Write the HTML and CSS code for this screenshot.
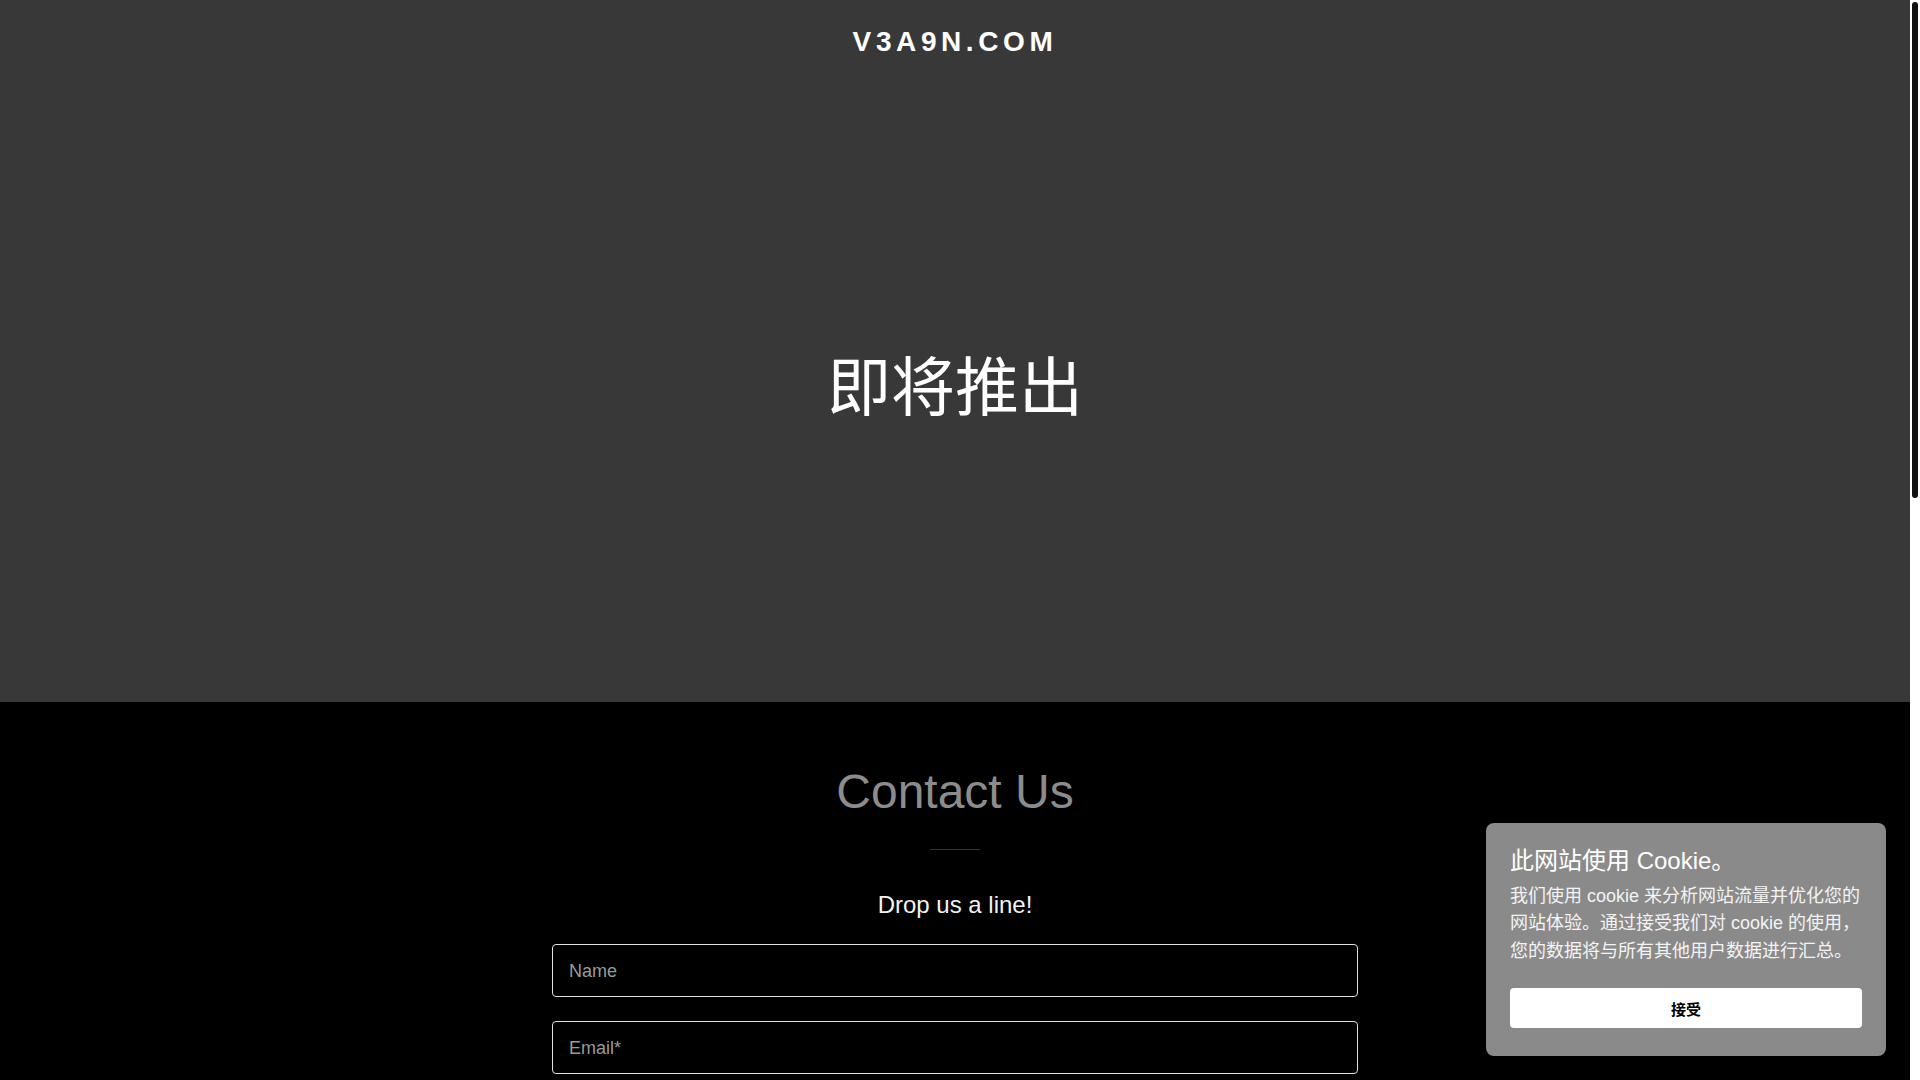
FILE: index.html
```html
<!DOCTYPE html>
<html lang="zh-CN">
<head>
<meta charset="utf-8">
<title>V3A9N.COM</title>
<link rel="stylesheet" href="styles.css">
</head>
<body>
  <div class="page">
    <section class="hero">
      <header class="site-header">
        <h1 class="brand">V3A9N.COM</h1>
      </header>
      <div class="hero-main">
        <h2 class="coming">即将推出</h2>
      </div>
    </section>

    <section class="contact">
      <h2 class="contact-title">Contact Us</h2>
      <div class="divider"></div>
      <p class="contact-sub">Drop us a line!</p>
      <form class="contact-form">
        <input class="field" type="text" placeholder="Name">
        <input class="field" type="email" placeholder="Email*">
        <textarea class="field field-area" placeholder="Message"></textarea>
        <button class="send" type="button">Send</button>
      </form>
    </section>

    <footer class="site-footer">
      <p class="copy">Copyright © 2024 V3A9N.COM - 保留所有权利。</p>
    </footer>
  </div>

  <div class="cookie">
    <h3 class="cookie-title">此网站使用 Cookie。</h3>
    <p class="cookie-text">我们使用 cookie 来分析网站流量并优化您的网站体验。通过接受我们对 cookie 的使用，您的数据将与所有其他用户数据进行汇总。</p>
    <button class="cookie-btn" type="button">接受</button>
  </div>

  <div class="scrollbar" aria-hidden="true">
    <div class="scrollbar-thumb"></div>
  </div>
</body>
</html>
```

FILE: styles.css
```css
html {
  background: #000;
}

body {
  margin: 0;
  padding-right: 10px;
  background: #000;
  font-family: "Liberation Sans", Arial, "Noto Sans CJK SC", sans-serif;
  color: #fff;
}

.scrollbar {
  position: fixed;
  top: 0;
  right: 0;
  width: 10px;
  height: 100vh;
  box-sizing: border-box;
  padding: 2px 2px 0;
  background: #fff;
}
.scrollbar-thumb {
  height: 496px;
  background: #111;
  border-radius: 3px;
}

.hero {
  height: 702px;
  background: #383838;
  display: flex;
  flex-direction: column;
}

.site-header {
  height: 84px;
  padding-top: 24px;
  box-sizing: border-box;
  text-align: center;
}

.brand {
  margin: 0;
  font-size: 28px;
  line-height: 36px;
  font-weight: 700;
  letter-spacing: 4.6px;
  color: #fff;
}

.hero-main {
  flex: 1;
  display: flex;
  align-items: center;
  justify-content: center;
  padding-bottom: 22px;
}

.coming {
  margin: 0;
  font-family: "Noto Sans CJK SC", "Liberation Sans", sans-serif;
  font-weight: 400;
  font-size: 64px;
  line-height: 1.2;
  color: #fff;
}

.contact {
  padding-top: 61px;
  display: flex;
  flex-direction: column;
  align-items: center;
  min-height: 1500px;
  box-sizing: border-box;
}

.contact-title {
  margin: 0;
  font-size: 48px;
  line-height: 1.2;
  font-weight: 400;
  color: #8c8c8c;
}

.divider {
  width: 50px;
  height: 1px;
  margin-top: 28px;
  background: #333;
}

.contact-sub {
  margin: 40px 0 0;
  font-size: 24px;
  line-height: 30px;
  color: #f2f2f2;
}

.contact-form {
  width: 806px;
  margin-top: 24px;
  display: flex;
  flex-direction: column;
  gap: 24px;
}

.field {
  box-sizing: border-box;
  height: 53px;
  width: 100%;
  padding: 2px 16px 0;
  background: #000;
  border: 1px solid #e0e0e0;
  border-radius: 4px;
  color: #fff;
  font-family: "Liberation Sans", Arial, sans-serif;
  font-size: 18px;
  outline: none;
}
.field::placeholder {
  color: #9a9a9a;
}
.field-area {
  height: 150px;
  padding-top: 16px;
  resize: none;
}

.send {
  align-self: stretch;
  height: 56px;
  background: #fff;
  color: #000;
  border: 0;
  border-radius: 4px;
  font-family: "Liberation Sans", Arial, sans-serif;
  font-weight: 700;
  font-size: 14px;
  letter-spacing: 2px;
  text-transform: uppercase;
}

.site-footer {
  padding: 40px 0;
  text-align: center;
}
.copy {
  margin: 0;
  color: #8c8c8c;
  font-size: 15px;
}

.cookie {
  position: fixed;
  right: 34px;
  bottom: 24px;
  width: 400px;
  box-sizing: border-box;
  padding: 21px 24px 28px;
  background: #8a8a8a;
  border-radius: 8px;
  font-family: "Liberation Sans", Arial, "Noto Sans CJK SC", sans-serif;
}

.cookie-title {
  margin: 0;
  font-size: 24px;
  line-height: 34px;
  font-weight: 400;
  color: #fff;
}

.cookie-text {
  margin: 5px 0 0;
  font-size: 18px;
  line-height: 27.5px;
  color: #f4f4f4;
}

.cookie-btn {
  display: block;
  width: 100%;
  height: 40px;
  margin-top: 23px;
  background: #fff;
  border: 0;
  border-radius: 4px;
  color: #000;
  font-family: "Noto Sans CJK SC", sans-serif;
  font-weight: 700;
  font-size: 15px;
}
```
